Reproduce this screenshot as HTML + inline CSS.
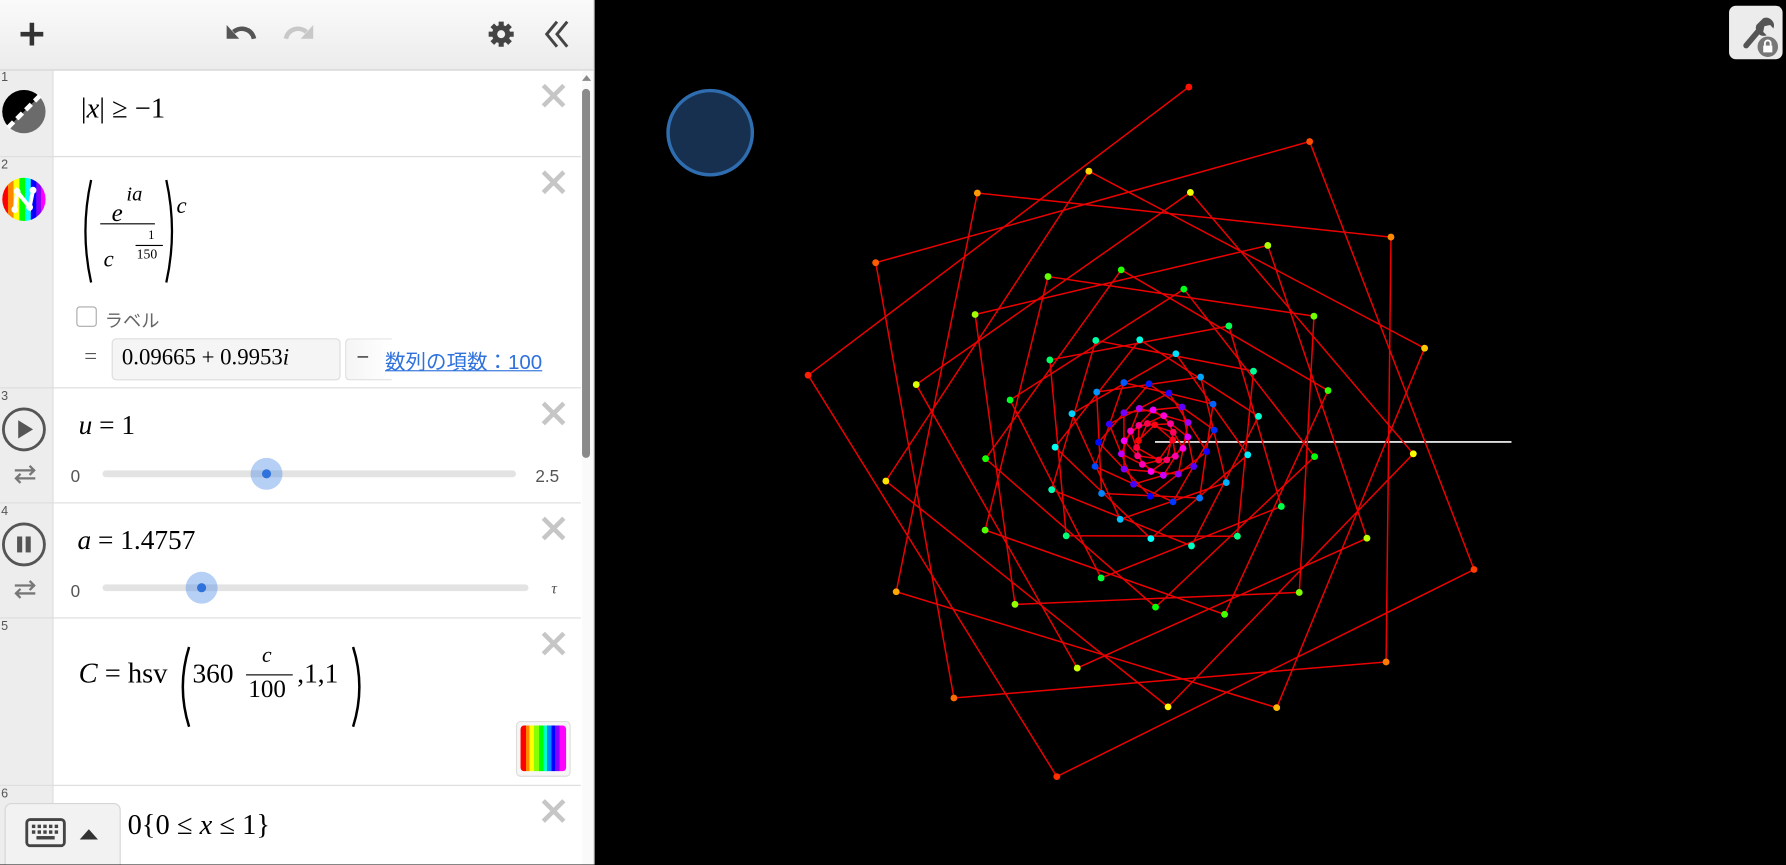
<!DOCTYPE html>
<html><head><meta charset="utf-8">
<style>
html,body{margin:0;padding:0;width:1786px;height:864px;overflow:hidden;background:#000}
#w{position:absolute;left:0;top:0;width:1568px;height:759px;transform:scale(1.13903);transform-origin:0 0;font-family:"Liberation Sans","Noto Sans CJK JP",sans-serif}
#panel{position:absolute;left:0;top:0;width:521px;height:759px;background:#fff;border-right:1px solid #ccc;overflow:hidden}
#tb{position:absolute;left:0;top:0;width:521px;height:61px;background:linear-gradient(#fafafa,#ececec);border-bottom:1px solid #cfcfcf}
#gut{position:absolute;left:0;top:62px;width:46px;height:697px;background:#ededed;border-right:1px solid #ddd}
.sep{position:absolute;left:0;width:510px;height:1px;background:#ddd}
.num{position:absolute;left:1px;font-size:11px;color:#555}
.x{position:absolute;left:474px;width:24px;height:24px}
.m{position:absolute;font-family:"Liberation Serif","DejaVu Serif",serif;color:#000;white-space:nowrap}
.i{font-style:italic}
.track{position:absolute;height:6px;background:#e3e3e3;border-radius:3px}
.h{position:absolute;width:28px;height:28px;border-radius:50%;background:rgba(80,140,230,.42)}
.h:after{content:"";position:absolute;left:10px;top:10px;width:8px;height:8px;border-radius:50%;background:#2f72dc}
.sl{position:absolute;font-size:15px;color:#555}
.par{position:absolute}
</style></head><body>
<div id="w">
<svg id="g" style="position:absolute;left:522px;top:0" width="1046" height="759"></svg>
<div style="position:absolute;left:585px;top:78px;width:71px;height:71px;border-radius:50%;background:#17304f;border:3px solid #2f6db1"></div>
<div style="position:absolute;left:1518px;top:5px;width:47px;height:47px;border-radius:6px;background:#ececec">
<svg width="47" height="47" viewBox="0 0 47 47"><path d="M15 35 L26 22" stroke="#555" stroke-width="5" stroke-linecap="round"/><path d="M24 17 a7 7 0 0 0 9 9 l-3-3 l1-5 l5-1 l3 3 a7 7 0 0 0-9-9z" fill="#555"/><circle cx="34" cy="36" r="9" fill="#777"/><rect x="30" y="35" width="8" height="6" fill="#fff"/><path d="M31.5 35v-2a2.5 2.5 0 0 1 5 0v2" stroke="#fff" stroke-width="1.6" fill="none"/></svg></div>

<div id="panel">
<div id="tb">
<svg style="position:absolute;left:16px;top:18px" width="24" height="24"><path d="M12 2v20M2 12h20" stroke="#333" stroke-width="4"/></svg>
<svg style="position:absolute;left:196px;top:16px" width="32" height="24"><path d="M27 18 C25 9 15 7 9 12" stroke="#555" stroke-width="4" fill="none"/><path d="M3 6 L3 18 L14 18 Z" fill="#555"/></svg>
<svg style="position:absolute;left:246px;top:16px" width="32" height="24"><path d="M5 18 C7 9 17 7 23 12" stroke="#c8c8c8" stroke-width="4" fill="none"/><path d="M29 6 L29 18 L18 18 Z" fill="#c8c8c8"/></svg>
<svg style="position:absolute;left:428px;top:18px" width="24" height="24" viewBox="0 0 24 24"><g fill="#444"><circle cx="12" cy="12" r="8"/><g stroke="#444" stroke-width="4.5"><path d="M12 1v22M1 12h22M4.2 4.2l15.6 15.6M19.8 4.2L4.2 19.8"/></g></g><circle cx="12" cy="12" r="3.5" fill="#f2f2f2"/></svg>
<svg style="position:absolute;left:476px;top:16px" width="26" height="28"><path d="M13 3L4 14l9 11M22 3l-9 11 9 11" stroke="#444" stroke-width="2.6" fill="none"/></svg>
</div>
<div id="gut"></div>
<div style="position:absolute;left:511px;top:62px;width:10px;height:697px;background:#fafafa"></div>
<div style="position:absolute;left:511px;top:78px;width:7px;height:324px;border-radius:4px;background:#8a8a8a"></div>
<svg style="position:absolute;left:510px;top:64px" width="10" height="8"><path d="M1 7L5 2L9 7Z" fill="#888"/></svg>

<div class="sep" style="top:137px"></div><div class="sep" style="top:340px"></div><div class="sep" style="top:441px"></div><div class="sep" style="top:542px"></div><div class="sep" style="top:689px"></div>
<div class="num" style="top:62px">1</div><div class="num" style="top:139px">2</div><div class="num" style="top:342px">3</div><div class="num" style="top:443px">4</div><div class="num" style="top:544px">5</div><div class="num" style="top:691px">6</div>

<svg class="x" style="top:72px" viewBox="0 0 24 24"><path d="M3 3L21 21M21 3L3 21" stroke="#c6c6c6" stroke-width="4"/></svg>
<svg class="x" style="top:148px" viewBox="0 0 24 24"><path d="M3 3L21 21M21 3L3 21" stroke="#c6c6c6" stroke-width="4"/></svg>
<svg class="x" style="top:351px" viewBox="0 0 24 24"><path d="M3 3L21 21M21 3L3 21" stroke="#c6c6c6" stroke-width="4"/></svg>
<svg class="x" style="top:452px" viewBox="0 0 24 24"><path d="M3 3L21 21M21 3L3 21" stroke="#c6c6c6" stroke-width="4"/></svg>
<svg class="x" style="top:553px" viewBox="0 0 24 24"><path d="M3 3L21 21M21 3L3 21" stroke="#c6c6c6" stroke-width="4"/></svg>
<svg class="x" style="top:700px" viewBox="0 0 24 24"><path d="M3 3L21 21M21 3L3 21" stroke="#c6c6c6" stroke-width="4"/></svg>

<!-- row1 -->
<svg style="position:absolute;left:1px;top:78px" width="40" height="40" viewBox="0 0 40 40"><defs><clipPath id="c1"><circle cx="20" cy="20" r="19"/></clipPath></defs><g clip-path="url(#c1)"><rect width="40" height="40" fill="#6b6b6b"/><path d="M0 0H40L0 40Z" fill="#000"/></g><path d="M6 34L34 6" stroke="#fff" stroke-width="4" stroke-dasharray="7 4"/></svg>
<div class="m" style="left:71px;top:82px;font-size:25px">|<span class="i">x</span>| ≥ −1</div>

<!-- row2 -->
<svg style="position:absolute;left:1px;top:155px" width="40" height="40" viewBox="0 0 40 40"><defs><clipPath id="c2"><circle cx="20" cy="20" r="19"/></clipPath></defs><g clip-path="url(#c2)"><rect x="0" width="6" height="40" fill="#f00"/><rect x="6" width="5" height="40" fill="#f80"/><rect x="11" width="5" height="40" fill="#ff0"/><rect x="16" width="5" height="40" fill="#0f0"/><rect x="21" width="5" height="40" fill="#0ff"/><rect x="26" width="5" height="40" fill="#00f"/><rect x="31" width="4" height="40" fill="#80f"/><rect x="35" width="5" height="40" fill="#f0f"/></g><path d="M12 29L14 13L25 27L28 12" stroke="#fff" stroke-width="3.5" fill="none"/><g fill="#fff"><circle cx="12" cy="29" r="3"/><circle cx="14" cy="13" r="3"/><circle cx="25" cy="27" r="3"/><circle cx="28" cy="12" r="3"/></g></svg>
<svg class="par" style="left:70px;top:156px" width="90" height="94"><path d="M10 2 Q0 47 10 92" stroke="#000" stroke-width="2" fill="none"/><path d="M76 2 Q86 47 76 92" stroke="#000" stroke-width="2" fill="none"/></svg>
<div class="m i" style="left:98px;top:174px;font-size:22px">e</div>
<div class="m i" style="left:111px;top:160px;font-size:18px">ia</div>
<div style="position:absolute;left:88px;top:196px;width:48px;height:1px;background:#000"></div>
<div class="m i" style="left:91px;top:217px;font-size:20px">c</div>
<div class="m" style="left:130px;top:201px;font-size:11px">1</div>
<div style="position:absolute;left:119px;top:215px;width:24px;height:1px;background:#000"></div>
<div class="m" style="left:120px;top:216px;font-size:12px">150</div>
<div class="m i" style="left:155px;top:170px;font-size:20px">c</div>
<div style="position:absolute;left:67px;top:269px;width:16px;height:16px;border:1px solid #aaa;border-radius:3px;background:#fff"></div>
<div style="position:absolute;left:92px;top:268px;font-size:16px;color:#666">ラベル</div>
<div class="m" style="left:74px;top:302px;font-size:20px;color:#555">=</div>
<div style="position:absolute;left:98px;top:297px;width:199px;height:35px;background:#f5f5f5;border:1px solid #ddd;border-radius:4px"></div>
<div class="m" style="left:107px;top:303px;font-size:20px">0.09665 + 0.9953<span class="i">i</span></div>
<div style="position:absolute;left:303px;top:297px;width:40px;height:35px;background:linear-gradient(90deg,#f5f5f5,#fff);border:1px solid #ddd;border-right:none;border-radius:4px 0 0 4px"></div>
<div class="m" style="left:313px;top:303px;font-size:20px">−</div>
<div style="position:absolute;left:338px;top:304px;font-size:18px;color:#2f72dc;text-decoration:underline;background:#fff">数列の項数：100</div>

<!-- row3 -->
<svg style="position:absolute;left:1px;top:357px" width="40" height="40"><circle cx="20" cy="20" r="18" stroke="#555" stroke-width="2.5" fill="none"/><path d="M15 12L28 20L15 28Z" fill="#555"/></svg>
<svg style="position:absolute;left:10px;top:406px" width="24" height="20"><path d="M3 7H20M16 3L20 7L16 11M21 14H4M8 10L4 14L8 18" stroke="#777" stroke-width="2" fill="none"/></svg>
<div class="m" style="left:69px;top:361px;font-size:24px"><span class="i">u</span> = 1</div>
<div class="sl" style="left:62px;top:410px">0</div>
<div class="track" style="left:90px;top:413px;width:363px"></div>
<div class="h" style="left:220px;top:402px"></div>
<div class="sl" style="left:470px;top:410px">2.5</div>

<!-- row4 -->
<svg style="position:absolute;left:1px;top:458px" width="40" height="40"><circle cx="20" cy="20" r="18" stroke="#555" stroke-width="2.5" fill="none"/><rect x="14" y="13" width="4.5" height="14" fill="#555"/><rect x="21.5" y="13" width="4.5" height="14" fill="#555"/></svg>
<svg style="position:absolute;left:10px;top:507px" width="24" height="20"><path d="M3 7H20M16 3L20 7L16 11M21 14H4M8 10L4 14L8 18" stroke="#777" stroke-width="2" fill="none"/></svg>
<div class="m" style="left:68px;top:462px;font-size:24px"><span class="i">a</span> = 1.4757</div>
<div class="sl" style="left:62px;top:511px">0</div>
<div class="track" style="left:90px;top:513px;width:374px"></div>
<div class="h" style="left:163px;top:502px"></div>
<div class="m i" style="left:484px;top:510px;font-size:14px;color:#555">τ</div>

<!-- row5 -->
<div class="m" style="left:69px;top:578px;font-size:25px"><span class="i">C</span> = hsv</div>
<svg class="par" style="left:155px;top:566px" width="170" height="76"><path d="M11 2 Q0 37 11 72" stroke="#000" stroke-width="2.2" fill="none"/><path d="M155 2 Q166 37 155 72" stroke="#000" stroke-width="2.2" fill="none"/></svg>
<div class="m" style="left:169px;top:579px;font-size:24px">360</div>
<div class="m i" style="left:230px;top:565px;font-size:19px">c</div>
<div style="position:absolute;left:216px;top:592px;width:41px;height:1px;background:#000"></div>
<div class="m" style="left:218px;top:592px;font-size:22px">100</div>
<div class="m" style="left:261px;top:579px;font-size:24px">,1,1</div>
<div style="position:absolute;left:453px;top:633px;width:46px;height:47px;border:1px solid #ddd;border-radius:4px;background:#f6f6f6"></div>
<div style="position:absolute;left:457px;top:637px;width:40px;height:40px;border-radius:3px;background:linear-gradient(90deg,#f00 0 12%,#f80 12% 20%,#ff0 20% 30%,#8f0 30% 40%,#0f0 40% 50%,#0fc 50% 58%,#08f 58% 68%,#00f 68% 76%,#80f 76% 86%,#f0f 86%)"></div>

<!-- row6 -->
<div class="m" style="left:112px;top:711px;font-size:25px">0{0 ≤ <span class="i">x</span> ≤ 1}</div>
<div style="position:absolute;left:4px;top:705px;width:100px;height:60px;background:#f2f2f2;border:1px solid #d6d6d6;border-radius:6px"></div>
<svg style="position:absolute;left:22px;top:718px" width="38" height="28"><rect x="1.5" y="1.5" width="33" height="23" rx="3" fill="none" stroke="#444" stroke-width="2.5"/><g fill="#444"><rect x="6" y="6" width="3" height="3"/><rect x="11" y="6" width="3" height="3"/><rect x="16" y="6" width="3" height="3"/><rect x="21" y="6" width="3" height="3"/><rect x="26" y="6" width="3" height="3"/><rect x="6" y="11" width="3" height="3"/><rect x="11" y="11" width="3" height="3"/><rect x="16" y="11" width="3" height="3"/><rect x="21" y="11" width="3" height="3"/><rect x="26" y="11" width="3" height="3"/><rect x="10" y="16" width="16" height="3"/></g></svg>
<svg style="position:absolute;left:68px;top:726px" width="20" height="12"><path d="M2 11L10 2L18 11Z" fill="#333"/></svg>
</div>
</div>
<script>
(function(){
var g=document.getElementById('g'),ns='http://www.w3.org/2000/svg';
var cx=1014-522,cy=388,u=313,a=1.4757,pts=[];
for(var c=1;c<=100;c++){var r=Math.pow(c,-c/150),t=a*c;pts.push([cx+u*r*Math.cos(t),cy-u*r*Math.sin(t),c]);}
var l=document.createElementNS(ns,'line');l.setAttribute('x1',cx);l.setAttribute('y1',cy);l.setAttribute('x2',cx+u);l.setAttribute('y2',cy);l.setAttribute('stroke','#ddd');l.setAttribute('stroke-width','1.6');g.appendChild(l);
var p=document.createElementNS(ns,'polyline');p.setAttribute('points',pts.map(function(q){return q[0].toFixed(1)+','+q[1].toFixed(1)}).join(' '));p.setAttribute('fill','none');p.setAttribute('stroke','#e00');p.setAttribute('stroke-width','1.3');g.appendChild(p);
pts.forEach(function(q){var d=document.createElementNS(ns,'circle');d.setAttribute('cx',q[0]);d.setAttribute('cy',q[1]);d.setAttribute('r','3');d.setAttribute('fill','hsl('+(360*q[2]/100)+',100%,50%)');g.appendChild(d);});
})();
</script>
</body></html>
